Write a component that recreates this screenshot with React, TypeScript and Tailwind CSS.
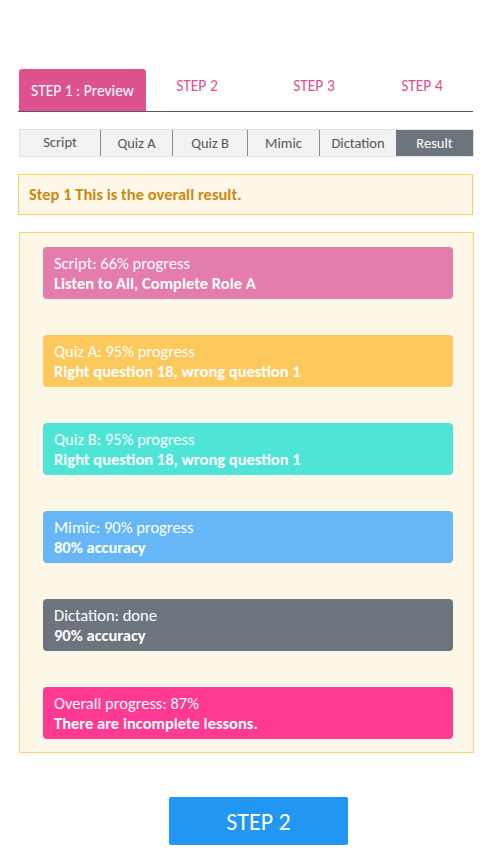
import React from "react";

const steps = ["STEP 2", "STEP 3", "STEP 4"];

const subTabs = [
	{ label: "Script", w: "w-[80px]" },
	{ label: "Quiz A", w: "w-[72px]" },
	{ label: "Quiz B", w: "w-[75px]" },
	{ label: "Mimic", w: "w-[72px]" },
	{ label: "Dictation", w: "w-[77px]" },
];

const results = [
	{ title: "Script: 66% progress", detail: "Listen to All, Complete Role A", color: "bg-[#e47cad]" },
	{ title: "Quiz A: 95% progress", detail: "Right question 18, wrong question 1", color: "bg-[#fec95c]" },
	{ title: "Quiz B: 95% progress", detail: "Right question 18, wrong question 1", color: "bg-[#4ee5d6]" },
	{ title: "Mimic: 90% progress", detail: "80% accuracy", color: "bg-[#67b7f7]" },
	{ title: "Dictation: done", detail: "90% accuracy", color: "bg-[#6c757d]" },
	{ title: "Overall progress: 87%", detail: "There are incomplete lessons.", color: "bg-[#ff3994]" },
];

export default function App() {
	return (
		<div className="min-h-[864px] w-[490px] bg-white pt-[69px] font-['Carlito','Lato',sans-serif]">
			<div className="ml-[18px] flex h-[43px] w-[455px] border-b border-[#5a5a5a]">
				<div className="ml-px flex w-[127px] items-center justify-center rounded-t-[3px] bg-[#de5292] pt-[2px] text-[15.5px] text-white">
					STEP 1 : Preview
				</div>
				<div className="flex w-[102px] justify-center pt-[5px] text-[15.5px] text-[#e0508e]">{steps[0]}</div>
				<div className="flex w-[132px] justify-center pt-[5px] text-[15.5px] text-[#e0508e]">{steps[1]}</div>
				<div className="flex w-[84px] justify-center pt-[5px] text-[15.5px] text-[#e0508e]">{steps[2]}</div>
			</div>

			<div className="ml-[19px] mt-[17px] flex h-[28px] w-[455px] border border-[#e2e2e2] bg-[#f2f2f2] text-[14.5px] text-[#555]">
				{subTabs.map((t, i) => (
					<div
						key={t.label}
						className={`${t.w} flex items-center justify-center ${i > 0 ? "border-l border-[#8c8c8c] pt-[2px]" : ""}`}
					>
						{t.label}
					</div>
				))}
				<div className="flex flex-1 items-center justify-center bg-[#6c757d] pt-[2px] text-white">Result</div>
			</div>

			<div className="ml-[18px] mt-[17px] flex h-[41px] w-[455px] items-center border border-[#ffd062] bg-[#fff8e8] px-[10px] text-[16.5px] font-bold text-[#c98a12]">
				Step 1 This is the overall result.
			</div>

			<div className="ml-[19px] mt-[17px] flex w-[455px] flex-col gap-[36px] border border-[#fcd36c] bg-[#fdf7e7] pb-[13px] pl-[23px] pr-[20px] pt-[14px]">
				{results.map((r) => (
					<div key={r.title} className={`${r.color} flex h-[52px] flex-col justify-center rounded-[4px] px-[11px] text-[16.5px] leading-[20px] text-white`}>
						<div>{r.title}</div>
						<div className="font-bold">{r.detail}</div>
					</div>
				))}
			</div>

			<div className="mt-[44px] flex">
				<button className="ml-[169px] h-[48px] w-[179px] rounded-[2px] bg-[#2196f3] pt-[2px] text-[24px] text-white">STEP 2</button>
			</div>
		</div>
	);
}
